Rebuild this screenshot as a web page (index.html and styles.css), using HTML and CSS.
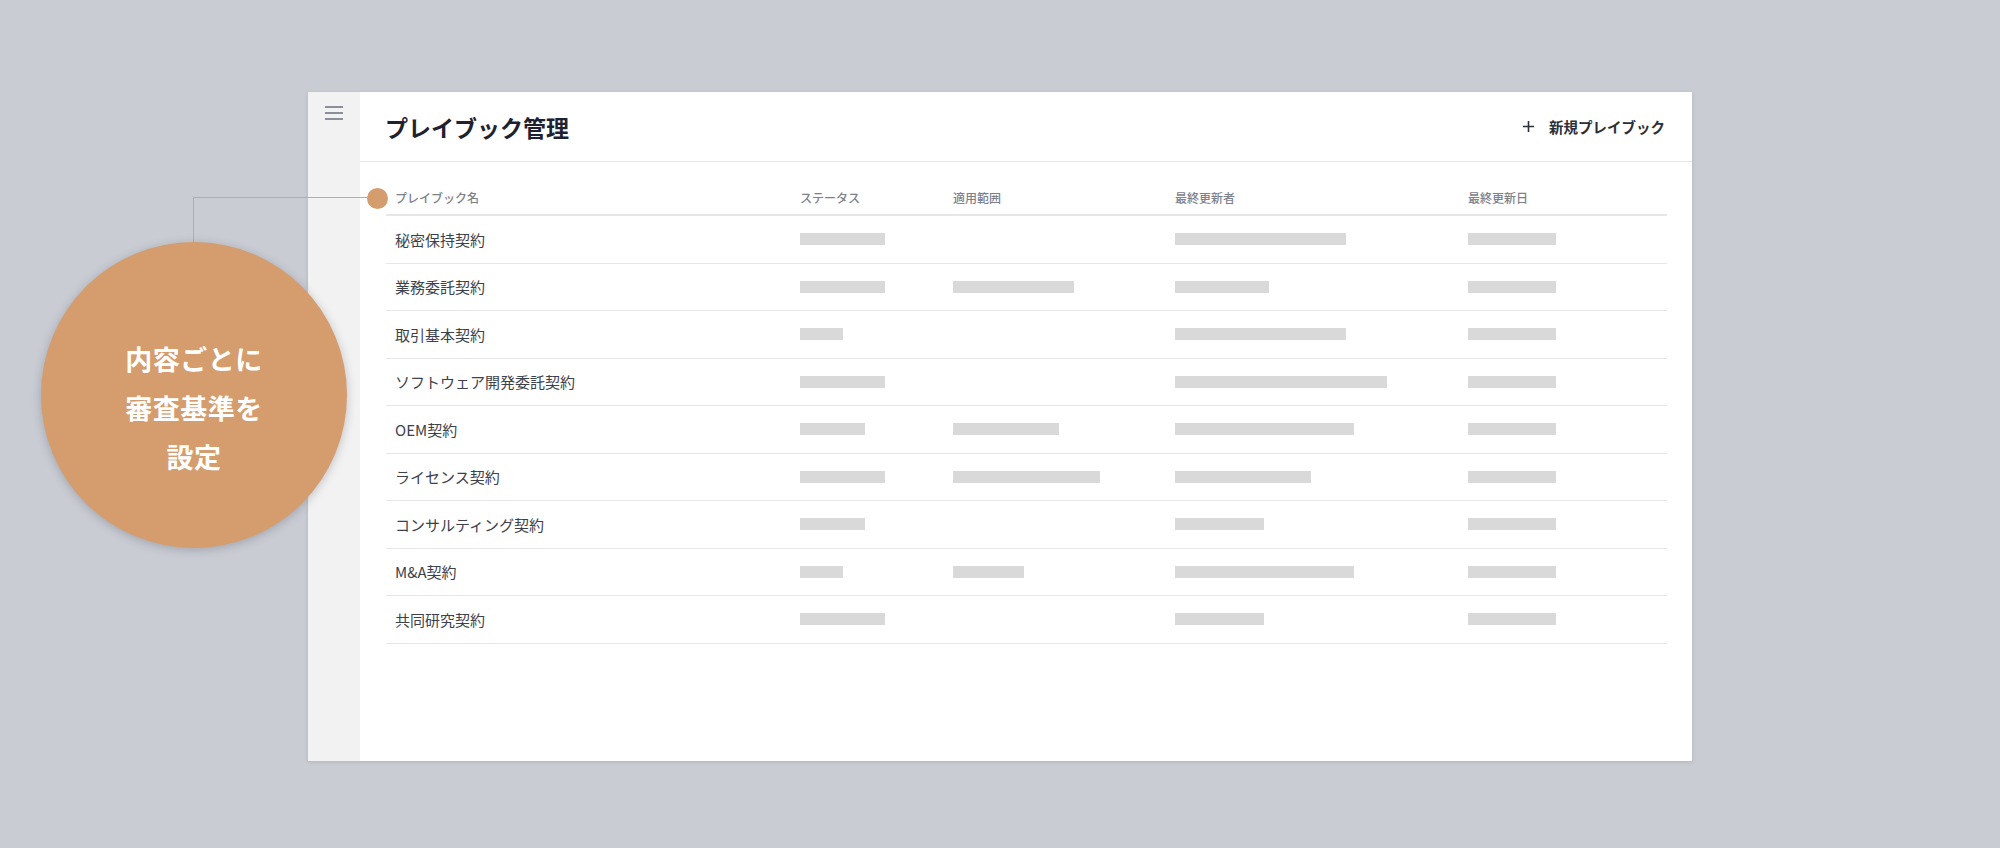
FILE: index.html
```html
<html>
<head>
<title>プレイブック管理</title>
<meta name="viewport" content="width=device-width, initial-scale=1">
<link rel="stylesheet" href="styles.css">
</head>
<body>
  <div class="stage">
    <div class="card">
      <aside class="sidebar">
        <svg class="menu" width="18" height="14" viewBox="0 0 18 14">
          <path d="M0 1h18M0 7h18M0 13h18" stroke="#8b8f99" stroke-width="1.8" fill="none"></path>
        </svg>
      </aside>
      <main class="main">
        <header class="head">
          <h1>プレイブック管理</h1>
          <button class="add" type="button">
            <svg width="11" height="11" viewBox="0 0 11 11">
              <path d="M5.5 0v11M0 5.5h11" stroke="#2b2f3a" stroke-width="1.6" fill="none"></path>
            </svg>
            新規プレイブック
          </button>
        </header>
        <div class="table">
          <div class="row thead">
            <div class="cell name">プレイブック名</div>
            <div class="cell">ステータス</div>
            <div class="cell">適用範囲</div>
            <div class="cell">最終更新者</div>
            <div class="cell">最終更新日</div>
          </div>
          <div class="row">
            <div class="cell name">秘密保持契約</div>
            <div class="cell"><span class="bar" style="width:85px"></span></div>
            <div class="cell"></div>
            <div class="cell"><span class="bar" style="width:171px"></span></div>
            <div class="cell"><span class="bar" style="width:88px"></span></div>
          </div>
          <div class="row">
            <div class="cell name">業務委託契約</div>
            <div class="cell"><span class="bar" style="width:85px"></span></div>
            <div class="cell"><span class="bar" style="width:121px"></span></div>
            <div class="cell"><span class="bar" style="width:94px"></span></div>
            <div class="cell"><span class="bar" style="width:88px"></span></div>
          </div>
          <div class="row">
            <div class="cell name">取引基本契約</div>
            <div class="cell"><span class="bar" style="width:43px"></span></div>
            <div class="cell"></div>
            <div class="cell"><span class="bar" style="width:171px"></span></div>
            <div class="cell"><span class="bar" style="width:88px"></span></div>
          </div>
          <div class="row">
            <div class="cell name">ソフトウェア開発委託契約</div>
            <div class="cell"><span class="bar" style="width:85px"></span></div>
            <div class="cell"></div>
            <div class="cell"><span class="bar" style="width:212px"></span></div>
            <div class="cell"><span class="bar" style="width:88px"></span></div>
          </div>
          <div class="row">
            <div class="cell name">OEM契約</div>
            <div class="cell"><span class="bar" style="width:65px"></span></div>
            <div class="cell"><span class="bar" style="width:106px"></span></div>
            <div class="cell"><span class="bar" style="width:179px"></span></div>
            <div class="cell"><span class="bar" style="width:88px"></span></div>
          </div>
          <div class="row">
            <div class="cell name">ライセンス契約</div>
            <div class="cell"><span class="bar" style="width:85px"></span></div>
            <div class="cell"><span class="bar" style="width:147px"></span></div>
            <div class="cell"><span class="bar" style="width:136px"></span></div>
            <div class="cell"><span class="bar" style="width:88px"></span></div>
          </div>
          <div class="row">
            <div class="cell name">コンサルティング契約</div>
            <div class="cell"><span class="bar" style="width:65px"></span></div>
            <div class="cell"></div>
            <div class="cell"><span class="bar" style="width:89px"></span></div>
            <div class="cell"><span class="bar" style="width:88px"></span></div>
          </div>
          <div class="row">
            <div class="cell name">M&amp;A契約</div>
            <div class="cell"><span class="bar" style="width:43px"></span></div>
            <div class="cell"><span class="bar" style="width:71px"></span></div>
            <div class="cell"><span class="bar" style="width:179px"></span></div>
            <div class="cell"><span class="bar" style="width:88px"></span></div>
          </div>
          <div class="row">
            <div class="cell name">共同研究契約</div>
            <div class="cell"><span class="bar" style="width:85px"></span></div>
            <div class="cell"></div>
            <div class="cell"><span class="bar" style="width:89px"></span></div>
            <div class="cell"><span class="bar" style="width:88px"></span></div>
          </div>
        </div>
      </main>
    </div>
  </div>

  <div class="connector"></div>
  <span class="dot"></span>
  <div class="callout">
    <p>内容ごとに<br>審査基準を<br>設定</p>
  </div>
</body>
</html>
```

FILE: styles.css
```css
body {
  margin: 0;
  width: 2000px;
  height: 848px;
  overflow: hidden;
  position: relative;
  background: #c9ccd3;
  font-family: "Noto Sans CJK JP", "Noto Sans", sans-serif;
}
.stage {
  padding: 92px 0 0 308px;
}
.card {
  display: flex;
  width: 1384px;
  height: 669px;
  background: #ffffff;
  box-shadow: 0 1px 4px rgba(0,0,0,0.12);
}
.sidebar {
  width: 52px;
  flex: none;
  background: #f2f2f2;
  display: flex;
  justify-content: center;
  padding-top: 14px;
  box-sizing: border-box;
}
.main {
  flex: 1;
  display: flex;
  flex-direction: column;
}
.head {
  height: 70px;
  box-sizing: border-box;
  border-bottom: 1px solid #e6e6e6;
  display: flex;
  align-items: center;
  justify-content: space-between;
  padding: 0 27px 0 25px;
}
.head h1 {
  margin: 0;
  font-size: 23px;
  font-weight: 700;
  color: #1e2230;
}
.add {
  display: flex;
  align-items: center;
  gap: 15px;
  border: 0;
  background: none;
  padding: 0;
  font-family: inherit;
  font-size: 14.5px;
  font-weight: 700;
  color: #2b2f3a;
}
.table {
  margin: 21px 25px 0 26px;
}
.row {
  display: grid;
  grid-template-columns: 414px 153px 222px 293px 1fr;
  align-items: center;
  height: 47.5px;
  box-sizing: border-box;
  border-bottom: 1px solid #e6e6e6;
  font-size: 15px;
  color: #3c414b;
}
.row.thead {
  height: 33px;
  border-bottom: 2px solid #e6e6e6;
  font-size: 12px;
  font-weight: 500;
  color: #7d818b;
  padding-bottom: 3px;
}
.cell {
  display: flex;
  align-items: center;
}
.cell.name {
  padding-left: 9px;
}
.bar {
  display: block;
  height: 12px;
  background: #d9d9d9;
}
.connector {
  position: absolute;
  left: 193px;
  top: 197px;
  width: 180px;
  height: 46px;
  border-left: 1.5px solid #d7a47b;
  border-top: 1.5px solid #d7a47b;
}
.dot {
  position: absolute;
  left: 367px;
  top: 188px;
  width: 21px;
  height: 21px;
  border-radius: 50%;
  background: #d59d6d;
}
.callout {
  position: absolute;
  left: 41px;
  top: 242px;
  width: 306px;
  height: 306px;
  border-radius: 50%;
  background: #d59d6d;
  box-shadow: 0 2px 10px rgba(40,45,60,0.25);
  display: flex;
  align-items: center;
  justify-content: center;
}
.callout p {
  margin: 24px 0 0 0;
  text-align: center;
  color: #ffffff;
  font-size: 27px;
  font-weight: 700;
  line-height: 49px;
  letter-spacing: 0.5px;
}
```
